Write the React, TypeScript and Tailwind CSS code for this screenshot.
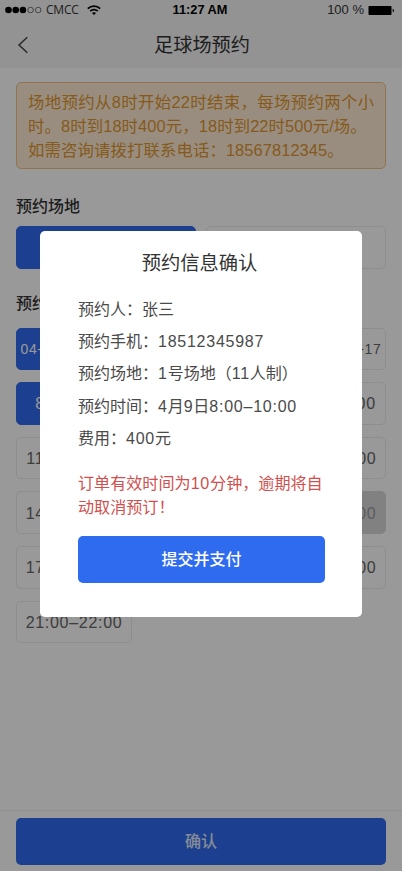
import { ReactNode, useState } from 'react';
import clsx from 'clsx';

const VENUES = ['1号场地', '2号场地'];
const DATES = ['04-09', '04-10', '04-11', '04-15', '04-16', '04-17'];

const SLOTS = [
  '8:00–9:00',
  '9:00–10:00',
  '10:00–11:00',
  '11:00–12:00',
  '12:00–13:00',
  '13:00–14:00',
  '14:00–15:00',
  '15:00–16:00',
  '16:00–17:00',
  '17:00–18:00',
  '18:00–19:00',
  '20:00–21:00',
  '21:00–22:00',
];
const DISABLED_SLOT = '16:00–17:00';

// Latin digits are set a little wider than the font's default
function Mixed({ text }: { text: string }) {
  return (
    <>
      {text.split(/([0-9:–/-]+)/).map((part, idx) =>
        /^[0-9]/.test(part) ? (
          <span key={idx} className="tracking-[0.75px]">
            {part}
          </span>
        ) : (
          part
        )
      )}
    </>
  );
}

function StatusBar() {
  return (
    <div className="grid h-5 grid-cols-3 items-center pr-[7px] pl-[5px] text-[13px] leading-5 text-[#333]">
      <div className="flex items-center">
        <svg width="38" height="8" viewBox="0 0 38 8" className="text-black">
          <circle cx="3.5" cy="4" r="3.3" fill="currentColor" />
          <circle cx="10.7" cy="4" r="3.3" fill="currentColor" />
          <circle cx="17.9" cy="4" r="3.3" fill="currentColor" />
          <circle cx="25.6" cy="4" r="2.8" fill="none" stroke="#555" strokeWidth="0.8" />
          <circle cx="33.2" cy="4" r="2.8" fill="none" stroke="#555" strokeWidth="0.8" />
        </svg>
        <span className="ml-[3px] font-['Open_Sans',sans-serif] text-[12px] tracking-[-0.2px]">
          CMCC
        </span>
        <svg width="14" height="10" viewBox="0 0 14 10" className="ml-[8px]" fill="none" stroke="#000" strokeWidth="1.8">
          <path d="M0.8 3.6C4.3 0.2 9.7 0.2 13.2 3.6" />
          <path d="M3.2 6.2C5.3 4.2 8.7 4.2 10.8 6.2" />
          <path d="M5 7.9L7 9.9L9 7.9C7.9 6.9 6.1 6.9 5 7.9Z" fill="#000" stroke="none" />
        </svg>
      </div>
      <div className="text-center text-[12.8px] font-bold text-black">11:27 AM</div>
      <div className="flex items-center justify-end">
        <span>100 %</span>
        <svg width="27" height="9" viewBox="0 0 27 9" className="ml-1">
          <rect x="0.5" width="23" height="9" rx="0.8" />
          <path d="M24.7 2.8C26.5 3.2 26.5 5.8 24.7 6.2Z" />
        </svg>
      </div>
    </div>
  );
}

interface OptionProps {
  active?: boolean;
  disabled?: boolean;
  onClick?: () => void;
  className?: string;
  children: ReactNode;
}

function Option({ active, disabled, onClick, className, children }: OptionProps) {
  return (
    <button
      onClick={onClick}
      disabled={disabled}
      className={clsx(
        'flex h-[42.6px] items-center justify-center rounded-[5px] border pt-[2px] whitespace-nowrap',
        active && 'border-[#2f6bee] bg-[#2f6bee] text-white',
        disabled && 'border-[#d8d8d8] bg-[#d8d8d8] text-[#999]',
        !active && !disabled && 'border-[#ebebeb] text-[#666]',
        className
      )}
    >
      {children}
    </button>
  );
}

function ConfirmDialog() {
  const rows = [
    '预约人：张三',
    '预约手机：18512345987',
    '预约场地：1号场地（11人制）',
    '预约时间：4月9日8:00–10:00',
    '费用：400元',
  ];

  return (
    <div className="absolute inset-0 flex items-start justify-center bg-black/40 pt-[231px]">
      <div
        role="dialog"
        className="h-[386px] w-[322px] rounded-[5px] bg-white px-[38px] pt-[18px]"
      >
        <h2 className="-ml-[3px] text-center text-[19.3px] leading-[30px] text-[#333]">
          预约信息确认
        </h2>
        <div className="mt-[15px] text-[16px] leading-[32.2px] whitespace-nowrap text-[#4a4a4a]">
          {rows.map((row) => (
            <p key={row}>
              <Mixed text={row} />
            </p>
          ))}
        </div>
        <p className="mt-4 -mr-1 text-[16.1px] leading-6 text-[#d0504f]">
          <Mixed text="订单有效时间为10分钟，逾期将自" />
          <br />
          动取消预订！
        </p>
        <button className="mt-[17px] h-[47px] w-[247px] rounded-[5px] bg-[#2f6bee] pt-px text-[16px] font-medium text-white">
          提交并支付
        </button>
      </div>
    </div>
  );
}

export default function App() {
  const [venue, setVenue] = useState(VENUES[0]);
  const [date, setDate] = useState(DATES[0]);
  const [slot, setSlot] = useState(SLOTS[0]);

  return (
    <div className="relative flex h-[871px] w-[402px] flex-col overflow-hidden bg-white font-['Liberation_Sans','Noto_Sans_CJK_SC',sans-serif] text-[#333]">
      <header className="h-[68px] bg-[#f5f5f5]">
        <StatusBar />
        <div className="grid h-[50px] grid-cols-[60px_1fr_60px] items-center">
          <svg width="12" height="18" viewBox="0 0 12 18" className="ml-[17px]" fill="none" stroke="#444" strokeWidth="1.5">
            <path d="M10.3 1.2L2 9L10.3 16.8" />
          </svg>
          <h1 className="pt-[2px] pl-[2px] text-center text-[19.2px]">足球场预约</h1>
        </div>
      </header>

      <main className="flex-1 px-4 pt-[14px]">
        <div className="h-[87px] rounded-[5px] border border-[#f3c088] bg-[#ffecd5] px-[11px] pt-[7px] text-[16.4px] leading-6 tracking-[0.1px] whitespace-nowrap text-[#e0962f]">
          <p className="tracking-[0.35px]">场地预约从8时开始22时结束，每场预约两个小</p>
          <p>时。8时到18时400元，18时到22时500元/场。</p>
          <p>如需咨询请拨打联系电话：18567812345。</p>
        </div>

        <h3 className="mt-[26px] text-[16px] leading-6 font-medium">预约场地</h3>
        <div className="mt-[7px] grid grid-cols-2 gap-[10px] text-[16px]">
          {VENUES.map((item) => (
            <Option key={item} active={item === venue} onClick={() => setVenue(item)}>
              {item}
            </Option>
          ))}
        </div>

        <h3 className="mt-[23px] text-[16px] leading-6 font-medium">预约时间</h3>
        <div className="mt-[12px] flex justify-between text-[14px] tracking-[0.6px]">
          {DATES.map((item) => (
            <Option
              key={item}
              className="w-[48px]"
              active={item === date}
              onClick={() => setDate(item)}
            >
              {item}
            </Option>
          ))}
        </div>
        <div className="mt-3 grid grid-cols-3 gap-x-[11px] gap-y-3 text-[16px] tracking-[0.7px]">
          {SLOTS.map((item) => (
            <Option
              key={item}
              active={item === slot}
              disabled={item === DISABLED_SLOT}
              onClick={() => setSlot(item)}
            >
              {item}
            </Option>
          ))}
        </div>
      </main>

      <footer className="border-t border-[#f0f0f0] px-4 pt-[7px] pb-[6px]">
        <button className="h-[47px] w-full rounded-[5px] bg-[#2f6bee] text-[16px] font-medium text-white/85">
          确认
        </button>
      </footer>

      <ConfirmDialog />
    </div>
  );
}
